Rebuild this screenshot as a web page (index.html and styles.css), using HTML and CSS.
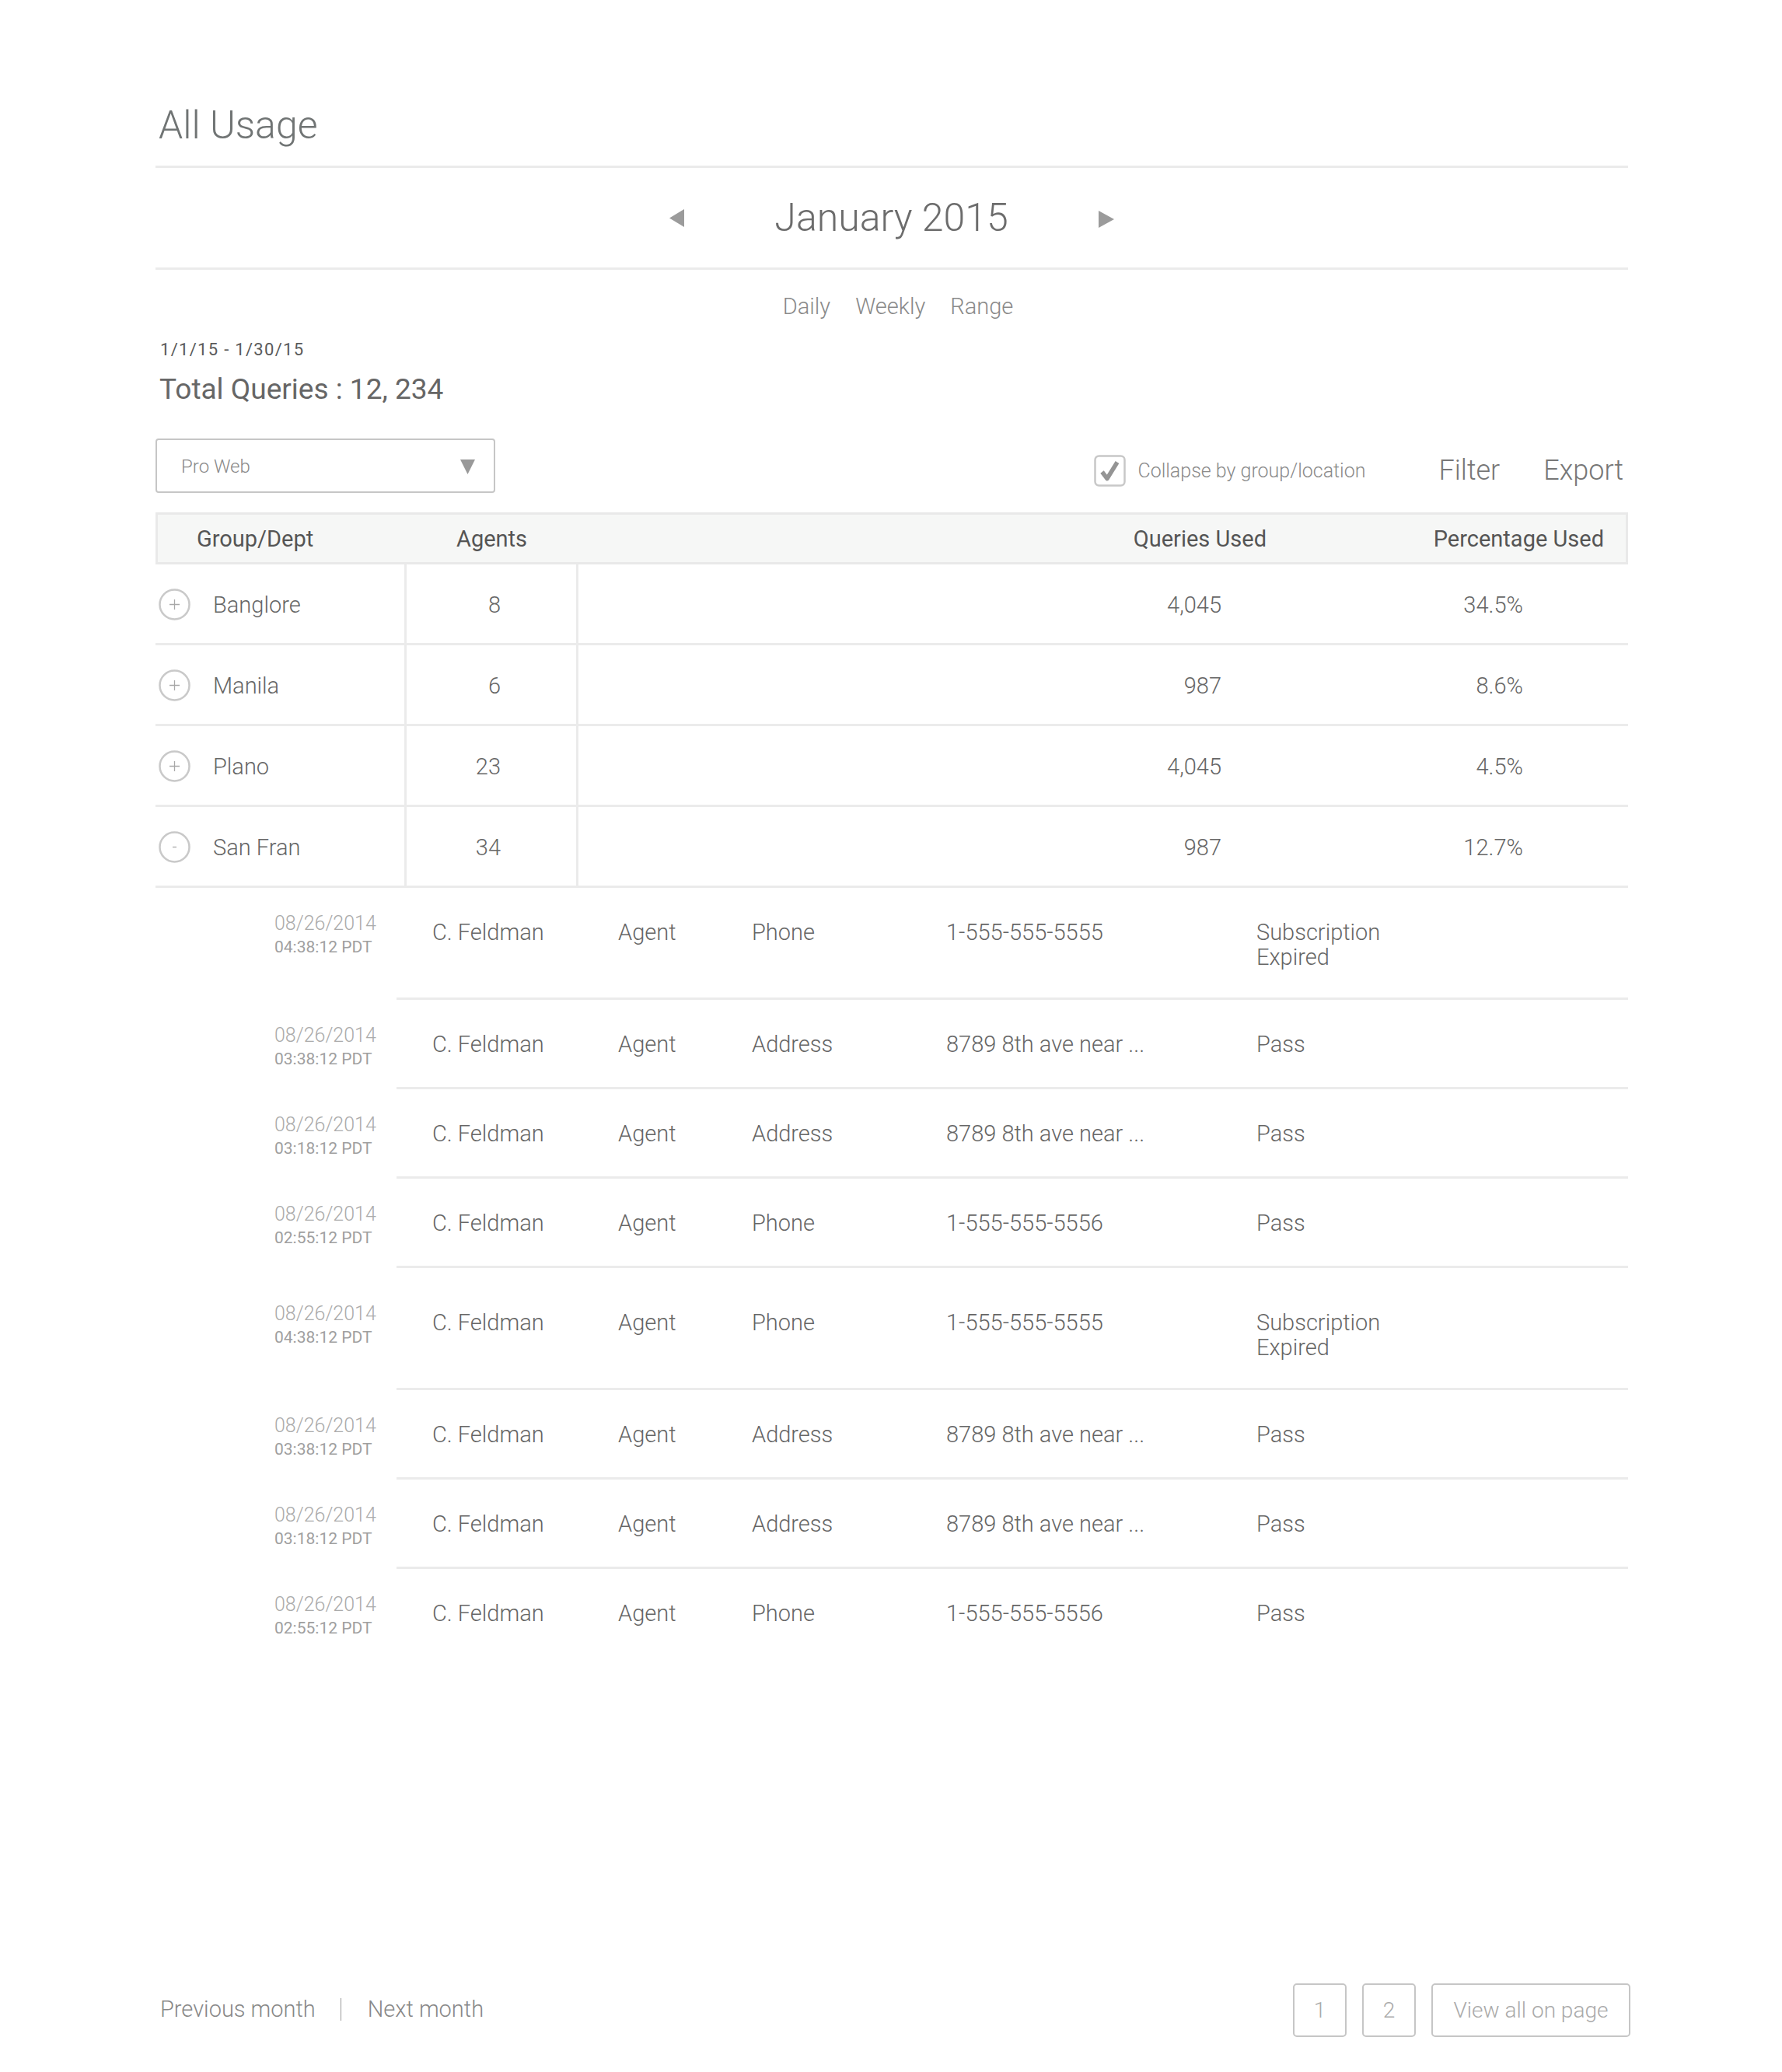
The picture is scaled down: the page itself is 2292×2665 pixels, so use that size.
FILE: index.html
```html
<!DOCTYPE html>
<html lang="en">
<head>
<meta charset="utf-8">
<title>All Usage</title>
<link rel="stylesheet" href="styles.css">
</head>
<body>
<div class="page">
  <h1 class="title">All Usage</h1>

  <div class="month-nav">
    <span class="arrow"><svg width="19" height="23" viewBox="0 0 19 23"><polygon points="19,0 19,23 0,11.5" fill="#9b9b9b"/></svg></span>
    <div class="month">January 2015</div>
    <span class="arrow arrow-right"><svg width="20" height="22" viewBox="0 0 20 22"><polygon points="0,0 0,22 20,11" fill="#9b9b9b"/></svg></span>
  </div>

  <nav class="tabs"><span>Daily</span><span>Weekly</span><span>Range</span></nav>

  <div class="range">1/1/15 - 1/30/15</div>
  <div class="total">Total Queries : 12, 234</div>

  <div class="toolbar">
    <div class="select">
      <span>Pro Web</span>
      <svg width="19" height="19" viewBox="0 0 19 19"><polygon points="0,0 19,0 9.5,19" fill="#999"/></svg>
    </div>
    <div class="actions">
      <label class="collapse">
        <svg width="41" height="41" viewBox="0 0 41 41"><rect x="1.5" y="1.5" width="38" height="38" rx="5" fill="none" stroke="#c8c8c8" stroke-width="2.5"/><path d="M10.5 22 L17 30.5 L30 9.5" fill="none" stroke="#949494" stroke-width="5.5" stroke-linejoin="round"/></svg>
        <span>Collapse by group/location</span>
      </label>
      <span class="action filter">Filter</span>
      <span class="action export">Export</span>
    </div>
  </div>

  <div class="thead">
    <div class="th th-group">Group/Dept</div>
    <div class="th th-agents">Agents</div>
    <div class="th"></div>
    <div class="th th-queries">Queries Used</div>
    <div class="th th-pct">Percentage Used</div>
  </div>

  <div class="group-row">
    <div class="cell cell-group">
      <svg width="41" height="41" viewBox="0 0 41 41"><circle cx="20.5" cy="20.5" r="19" fill="none" stroke="#c9c9c9" stroke-width="2.5"/><path d="M20.5 14v13M14 20.5h13" stroke="#a8a8a8" stroke-width="1.3"/></svg>
      <span>Banglore</span>
    </div>
    <div class="cell cell-agents">8</div>
    <div class="cell"></div>
    <div class="cell cell-queries">4,045</div>
    <div class="cell cell-pct">34.5%</div>
  </div>
  <div class="group-row">
    <div class="cell cell-group">
      <svg width="41" height="41" viewBox="0 0 41 41"><circle cx="20.5" cy="20.5" r="19" fill="none" stroke="#c9c9c9" stroke-width="2.5"/><path d="M20.5 14v13M14 20.5h13" stroke="#a8a8a8" stroke-width="1.3"/></svg>
      <span>Manila</span>
    </div>
    <div class="cell cell-agents">6</div>
    <div class="cell"></div>
    <div class="cell cell-queries">987</div>
    <div class="cell cell-pct">8.6%</div>
  </div>
  <div class="group-row">
    <div class="cell cell-group">
      <svg width="41" height="41" viewBox="0 0 41 41"><circle cx="20.5" cy="20.5" r="19" fill="none" stroke="#c9c9c9" stroke-width="2.5"/><path d="M20.5 14v13M14 20.5h13" stroke="#a8a8a8" stroke-width="1.3"/></svg>
      <span>Plano</span>
    </div>
    <div class="cell cell-agents">23</div>
    <div class="cell"></div>
    <div class="cell cell-queries">4,045</div>
    <div class="cell cell-pct">4.5%</div>
  </div>
  <div class="group-row">
    <div class="cell cell-group">
      <svg width="41" height="41" viewBox="0 0 41 41"><circle cx="20.5" cy="20.5" r="19" fill="none" stroke="#c9c9c9" stroke-width="2.5"/><path d="M18 20.5h5" stroke="#a8a8a8" stroke-width="1.3"/></svg>
      <span>San Fran</span>
    </div>
    <div class="cell cell-agents">34</div>
    <div class="cell"></div>
    <div class="cell cell-queries">987</div>
    <div class="cell cell-pct">12.7%</div>
  </div>

  <div class="details">
    <div class="detail tall">
      <div class="d-time"><div class="d-date">08/26/2014</div><div class="d-clock">04:38:12 PDT</div></div>
      <div class="d-fields"><span class="f-name">C. Feldman</span><span class="f-role">Agent</span><span class="f-type">Phone</span><span class="f-value">1-555-555-5555</span><span class="f-status">Subscription<br>Expired</span></div>
    </div>
    <div class="detail">
      <div class="d-time"><div class="d-date">08/26/2014</div><div class="d-clock">03:38:12 PDT</div></div>
      <div class="d-fields"><span class="f-name">C. Feldman</span><span class="f-role">Agent</span><span class="f-type">Address</span><span class="f-value">8789 8th ave near ...</span><span class="f-status">Pass</span></div>
    </div>
    <div class="detail">
      <div class="d-time"><div class="d-date">08/26/2014</div><div class="d-clock">03:18:12 PDT</div></div>
      <div class="d-fields"><span class="f-name">C. Feldman</span><span class="f-role">Agent</span><span class="f-type">Address</span><span class="f-value">8789 8th ave near ...</span><span class="f-status">Pass</span></div>
    </div>
    <div class="detail">
      <div class="d-time"><div class="d-date">08/26/2014</div><div class="d-clock">02:55:12 PDT</div></div>
      <div class="d-fields"><span class="f-name">C. Feldman</span><span class="f-role">Agent</span><span class="f-type">Phone</span><span class="f-value">1-555-555-5556</span><span class="f-status">Pass</span></div>
    </div>
    <div class="detail tall spaced">
      <div class="d-time"><div class="d-date">08/26/2014</div><div class="d-clock">04:38:12 PDT</div></div>
      <div class="d-fields"><span class="f-name">C. Feldman</span><span class="f-role">Agent</span><span class="f-type">Phone</span><span class="f-value">1-555-555-5555</span><span class="f-status">Subscription<br>Expired</span></div>
    </div>
    <div class="detail">
      <div class="d-time"><div class="d-date">08/26/2014</div><div class="d-clock">03:38:12 PDT</div></div>
      <div class="d-fields"><span class="f-name">C. Feldman</span><span class="f-role">Agent</span><span class="f-type">Address</span><span class="f-value">8789 8th ave near ...</span><span class="f-status">Pass</span></div>
    </div>
    <div class="detail">
      <div class="d-time"><div class="d-date">08/26/2014</div><div class="d-clock">03:18:12 PDT</div></div>
      <div class="d-fields"><span class="f-name">C. Feldman</span><span class="f-role">Agent</span><span class="f-type">Address</span><span class="f-value">8789 8th ave near ...</span><span class="f-status">Pass</span></div>
    </div>
    <div class="detail last">
      <div class="d-time"><div class="d-date">08/26/2014</div><div class="d-clock">02:55:12 PDT</div></div>
      <div class="d-fields"><span class="f-name">C. Feldman</span><span class="f-role">Agent</span><span class="f-type">Phone</span><span class="f-value">1-555-555-5556</span><span class="f-status">Pass</span></div>
    </div>
  </div>

  <footer class="footer">
    <div class="month-links">
      <span>Previous month</span>
      <span class="sep"></span>
      <span>Next month</span>
    </div>
    <div class="pager">
      <span class="page-btn">1</span>
      <span class="page-btn">2</span>
      <span class="page-btn wide">View all on page</span>
    </div>
  </footer>
</div>
</body>
</html>
```

FILE: styles.css
```css
* { box-sizing: border-box; }

body {
  margin: 0;
  background: #ffffff;
  font-family: Roboto, "Liberation Sans", Arial, sans-serif;
  font-weight: 300;
  color: #666666;
}

.page {
  width: 2292px;
  padding: 131px 198px 0 200px;
}

.title {
  margin: 0 0 22px 0;
  padding-left: 4px;
  font-size: 50px;
  line-height: 60px;
  font-weight: 300;
  color: #707474;
}

.month-nav {
  height: 134px;
  border-top: 3px solid #ebebeb;
  border-bottom: 3px solid #ebebeb;
  display: flex;
  align-items: center;
  justify-content: center;
  gap: 116px;
}

.arrow { display: flex; }
.arrow-right { margin-top: 4px; }

.month {
  font-size: 50px;
  line-height: 60px;
  color: #6c6c6c;
}

.tabs {
  margin-top: 30px;
  display: flex;
  justify-content: center;
  gap: 32px;
  padding-left: 16px;
  font-size: 29px;
  line-height: 34px;
  color: #8a8a8a;
}

.range {
  margin-top: 26px;
  padding-left: 6px;
  font-size: 22px;
  line-height: 26px;
  letter-spacing: 1.3px;
  font-weight: 400;
  color: #5a5a5a;
}

.total {
  margin-top: 16px;
  padding-left: 5px;
  font-size: 37px;
  line-height: 44px;
  font-weight: 400;
  color: #666666;
}

.toolbar {
  margin-top: 41px;
  display: flex;
  justify-content: space-between;
  align-items: center;
}

.select {
  width: 437px;
  height: 70px;
  border: 2px solid #c6c6c6;
  border-radius: 4px;
  display: flex;
  align-items: center;
  justify-content: space-between;
  padding: 2px 24px 0 31px;
  font-size: 24px;
  color: #8a8a8a;
}

.actions {
  display: flex;
  align-items: center;
  margin-top: 12px;
  padding-right: 6px;
}

.collapse {
  display: flex;
  align-items: center;
  gap: 15px;
  font-size: 25px;
  color: #8a8a8a;
}
.collapse svg { display: block; }

.action {
  font-size: 36px;
  line-height: 44px;
  color: #777777;
}
.filter { margin-left: 94px; }
.export { margin-left: 56px; }

.thead {
  margin-top: 25px;
  height: 67px;
  display: grid;
  grid-template-columns: 323px 221px 1fr 240px 454px;
  align-items: center;
  border: 3px solid #e9e9e9;
  background: #f6f7f6;
  font-size: 29px;
  font-weight: 400;
  color: #555555;
}
.th-group { padding-left: 50px; }
.th-agents { text-align: center; padding-right: 8px; }
.th-queries { text-align: right; padding-right: 8px; }
.th-pct { text-align: right; padding-right: 28px; }

.group-row {
  height: 104px;
  display: grid;
  grid-template-columns: 323px 221px 1fr 240px 454px;
  border-bottom: 3px solid #ebebeb;
  font-size: 29px;
  color: #666666;
}
.cell {
  display: flex;
  align-items: center;
  padding-top: 2px;
}
.cell-group {
  padding-left: 4px;
  gap: 29px;
  border-right: 3px solid #ebebeb;
}
.cell-group svg { display: block; }
.cell-agents {
  justify-content: flex-end;
  padding-right: 97px;
  border-right: 3px solid #ebebeb;
}
.cell-queries { justify-content: flex-end; padding-right: 69px; }
.cell-pct { justify-content: flex-end; padding-right: 135px; }

.detail {
  display: grid;
  grid-template-columns: 310px 1fr;
}
.d-time {
  padding: 30px 0 23px 153px;
}
.d-date {
  font-size: 25px;
  line-height: 31px;
  color: #ababab;
}
.d-clock {
  font-size: 21px;
  line-height: 31px;
  font-weight: 400;
  color: #9f9f9f;
}
.d-fields {
  display: flex;
  align-items: flex-start;
  padding: 25px 0 25px 46px;
  border-bottom: 3px solid #ebebeb;
  font-size: 29px;
  line-height: 32px;
  color: #666666;
}
.d-fields span { margin-top: 16px; }
.f-name { width: 239px; }
.f-role { width: 172px; }
.f-type { width: 250px; }
.f-value { width: 399px; }

.detail.tall .d-fields { padding-bottom: 36px; }
.detail.spaced .d-fields { padding-top: 38px; }
.detail.spaced .d-time { padding-top: 43px; }
.detail.last .d-fields { border-bottom-color: transparent; }

.footer {
  margin-top: 418px;
  display: flex;
  justify-content: space-between;
  align-items: center;
  margin-right: -3px;
}

.month-links {
  display: flex;
  align-items: center;
  margin-top: -3px;
  padding-left: 6px;
  font-size: 29px;
  color: #888888;
}
.sep {
  width: 1px;
  height: 29px;
  background: #9a9a9a;
  margin: 0 34px 0 32px;
}

.pager {
  display: flex;
  gap: 20px;
}
.page-btn {
  height: 69px;
  min-width: 69px;
  border: 2px solid #c6c6c6;
  border-radius: 5px;
  display: flex;
  align-items: center;
  justify-content: center;
  font-size: 28px;
  color: #aaaaaa;
}
.page-btn.wide {
  width: 256px;
  font-size: 28px;
}
```
